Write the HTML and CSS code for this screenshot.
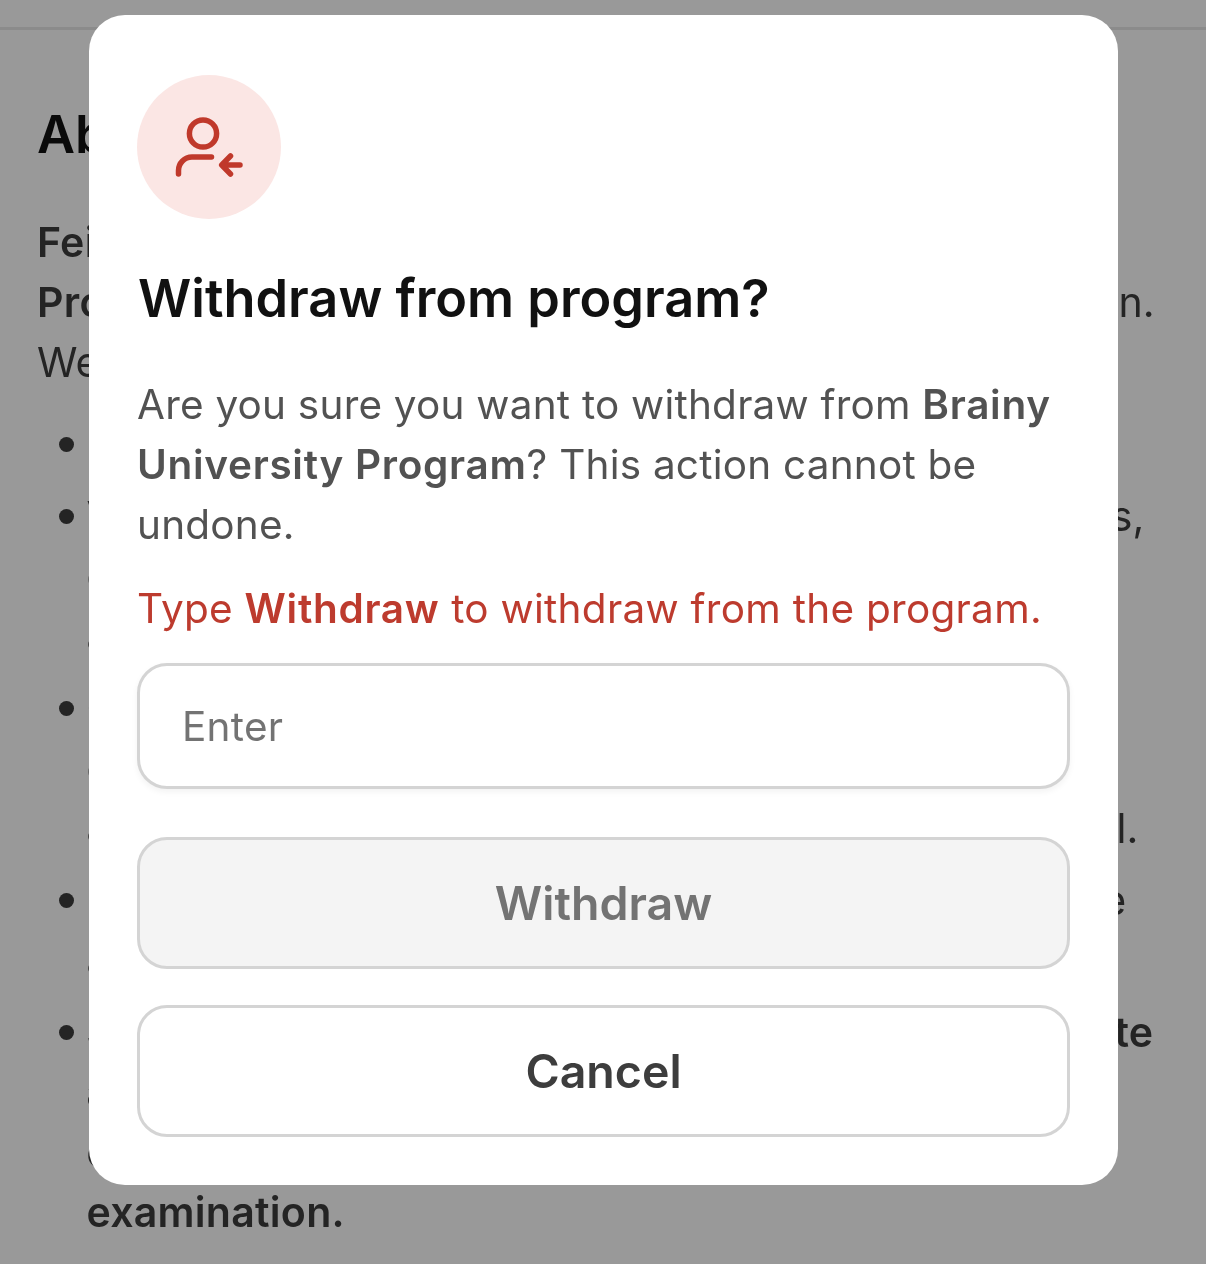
FILE: index.html
```html
<!DOCTYPE html>
<html lang="en">
<head>
  <meta charset="UTF-8" />
  <meta name="viewport" content="width=device-width, initial-scale=1.0" />
  <title>Withdraw from program</title>
  <link rel="stylesheet" href="styles.css">
</head>
<body>
  <div class="page">
    <div class="topbar"></div>
    <main class="content">
      <h2>About the program</h2>
      <p>
        <strong>Feifei Li Brainy University</strong> is open to all new students<br>
        <strong>Program</strong> prepares you for high scores in the examination.<br>
        We offer these benefits to all of our students
      </p>
      <ul>
        <li><div>Free access to all of the lessons</div></li>
        <li><div>Video lessons and practice tests for all major subjects,<br>class notes and reviews from teachers<br>and weekly quizzes</div></li>
        <li><div>Guided revision sessions for students<br>every single week in the term<br>and usable notes to download in each and every level.</div></li>
        <li><div>Personal reports on your own progress for the course<br>and the semester</div></li>
        <li><div><strong>Students who complete this program get a certificate<br>and a voucher<br>covering the fee for the<br>examination.</strong></div></li>
      </ul>
    </main>
  </div>

  <div class="overlay">
    <div class="modal">
      <div class="modal-icon">
        <svg width="144" height="144" viewBox="0 0 144 144" fill="none" stroke="#c0392b" stroke-width="5.5" stroke-linecap="round" stroke-linejoin="round">
          <circle cx="66" cy="58.5" r="13.6" />
          <path d="M74.5 82H55a13.5 13.5 0 0 0-13.5 13.5V99" />
          <path d="M103 90H85.5M93.5 81l-8.8 9 8.8 9" />
        </svg>
      </div>
      <h1>Withdraw from program?</h1>
      <p class="modal-text">Are you sure you want to withdraw from <strong>Brainy University Program</strong>? This action cannot be undone.</p>
      <p class="modal-warning">Type <strong>Withdraw</strong> to withdraw from the program.</p>
      <input class="modal-input" type="text" placeholder="Enter" />
      <button class="btn btn-disabled" type="button">Withdraw</button>
      <button class="btn btn-cancel" type="button">Cancel</button>
    </div>
  </div>
</body>
</html>
```

FILE: styles.css
```css
:root {
  --text: #3d3d3d;
  --muted: #525252;
  --placeholder: #737373;
  --danger: #bd3b2e;
  --danger-bg: #fbe6e4;
  --line: #d4d4d4;
}

* {
  box-sizing: border-box;
  font-family: 'Inter', 'Liberation Sans', sans-serif;
}

html, body {
  height: 100%;
}

body {
  margin: 0;
  overflow: hidden;
  background: #fff;
  color: var(--text);
}

.topbar {
  height: 30px;
  border-bottom: 3px solid #e8e8e8;
}

.content {
  padding: 0 37px;
  font-size: 41.1px;
  line-height: 60px;
  white-space: nowrap;
  will-change: transform;
}

.content h2 {
  margin: 69px 0 0;
  font-size: 52.25px;
  line-height: 70px;
  font-weight: 600;
  color: #111;
}

.content p {
  margin: 43px 0 0;
}

.content strong {
  font-weight: 600;
  letter-spacing: 0.25px;
}

.content ul {
  margin: 22px 0 0;
  padding: 0 0 0 21.5px;
  list-style: none;
}

.content li {
  display: flex;
  gap: 13px;
  margin-bottom: 12px;
}

.content li::before {
  content: "";
  flex: none;
  width: 15px;
  height: 15px;
  margin-top: 23px;
  border-radius: 50%;
  background: var(--text);
}

.overlay {
  position: fixed;
  inset: 0;
  background: rgba(0, 0, 0, 0.4);
}

.modal {
  position: absolute;
  left: 89px;
  top: 15px;
  width: 1029px;
  height: 1170px;
  padding: 60px 48px 48px;
  background: #fff;
  border-radius: 36px;
  display: flex;
  flex-direction: column;
  will-change: transform;
}

.modal-icon {
  width: 144px;
  height: 144px;
  border-radius: 50%;
  background: var(--danger-bg);
}

.modal-icon svg {
  display: block;
}

.modal h1 {
  margin: 44px 0 0 1px;
  font-size: 52.25px;
  line-height: 70px;
  font-weight: 600;
  color: #111;
}

.modal-text {
  margin: 42px 0 0;
  font-size: 40.5px;
  line-height: 60px;
  letter-spacing: 0.22px;
  color: var(--muted);
}

.modal-text strong {
  font-weight: 600;
  letter-spacing: 0.7px;
}

.modal-warning {
  margin: 24px 0 0;
  font-size: 40.5px;
  line-height: 60px;
  letter-spacing: 0.28px;
  color: var(--danger);
}

.modal-warning strong {
  font-weight: 600;
  letter-spacing: 0.7px;
}

.modal-input {
  width: 100%;
  height: 126px;
  margin-top: 24px;
  padding: 0 42px;
  border: 3px solid var(--line);
  border-radius: 30px;
  background: #fff;
  box-shadow: 0 3px 6px rgba(0, 0, 0, 0.05);
  font-size: 40.5px;
  letter-spacing: 0.28px;
  color: var(--text);
}

.modal-input::placeholder {
  color: var(--placeholder);
  opacity: 1;
}

.btn {
  width: 100%;
  height: 132px;
  border: 3px solid var(--line);
  border-radius: 30px;
  font-size: 46.5px;
  font-weight: 600;
}

.btn-disabled {
  margin-top: 48px;
  background: #f4f4f4;
  color: var(--placeholder);
}

.btn-cancel {
  margin-top: 36px;
  background: #fff;
  color: var(--text);
}
```
